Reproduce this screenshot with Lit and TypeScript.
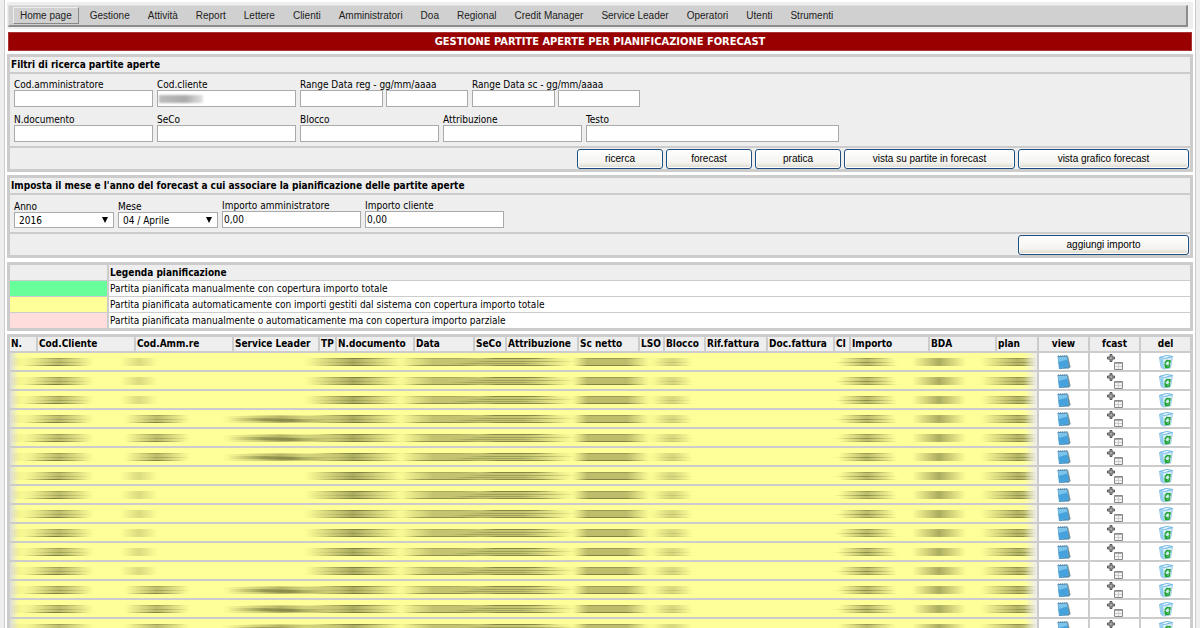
import { LitElement, html, svg, css } from "lit";
import { customElement } from "lit/decorators.js";

const MENU = ["Home page", "Gestione", "Attività", "Report", "Lettere", "Clienti", "Amministratori", "Doa", "Regional", "Credit Manager", "Service Leader", "Operatori", "Utenti", "Strumenti"];

const COLUMNS: [string, number][] = [
  ["N.", 26], ["Cod.Cliente", 96], ["Cod.Amm.re", 96], ["Service Leader", 84], ["TP", 15], ["N.documento", 76],
  ["Data", 58], ["SeCo", 30], ["Attribuzione", 70], ["Sc netto", 59], ["LSO", 23], ["Blocco", 39],
  ["Rif.fattura", 60], ["Doc.fattura", 65], ["CI", 14], ["Importo", 77], ["BDA", 65], ["plan", 40],
];
const ACTIONS: [string, number][] = [["view", 49], ["fcast", 49], ["del", 49]];

const LEGEND = [
  ["green", "Partita pianificata manualmente con copertura importo totale"],
  ["yellow", "Partita pianificata automaticamente con importi gestiti dal sistema con copertura importo totale"],
  ["pink", "Partita pianificata manualmente o automaticamente ma con copertura importo parziale"],
];

// true: the row carries an administrator and a service leader
const ROWS = [false, false, false, true, true, true, false, false, false, false, false, false, true, true, true];

// A redaction smear: start, end, top, height, opacity
type Streak = [number, number, number, number, number];
const COMMON: Streak[] = [
  [-20, 24, 5, 8, 0.1],
  [14, 84, 5, 8, 0.4], [22, 76, 5, 1, 0.35], [20, 82, 9, 1, 0.3], [12, 78, 12, 1, 0.7],
  [294, 392, 5, 8, 0.5], [304, 394, 5, 1, 0.6], [300, 388, 9, 1, 0.25], [304, 394, 12, 1, 0.65],
  [636, 682, 5, 8, 0.14], [646, 682, 5, 8, 0.14], [641, 686, 9, 1, 0.15], [641, 686, 12, 1, 0.15],
  [828, 886, 5, 8, 0.4], [833, 883, 5, 1, 0.4], [822, 888, 9, 1, 0.5], [830, 890, 12, 1, 0.4],
  [902, 956, 5, 8, 0.5],
  [970, 1046, 5, 8, 0.45], [975, 1040, 5, 1, 0.4], [980, 1050, 9, 1, 0.4], [975, 1045, 12, 1, 0.5],
];
const SHORT: Streak[] = [[110, 148, 5, 8, 0.22]];
const LONG: Streak[] = [
  [114, 180, 5, 8, 0.4], [118, 178, 5, 1, 0.3], [124, 182, 9, 1, 0.3], [116, 174, 12, 1, 0.6],
  [212, 330, 6, 7, 0.45], [218, 290, 8, 3, 0.4], [246, 318, 9, 3, 0.45], [230, 310, 5, 1, 0.3],
];
const WIDE: Streak[] = [
  [388, 566, 5, 8, 0.36], [392, 480, 12, 1, 0.5], [392, 470, 5, 1, 0.25], [470, 548, 5, 1, 0.6],
  [456, 568, 8, 1, 0.35], [440, 540, 10, 1, 0.3], [470, 556, 12, 1, 0.6],
  [562, 640, 5, 8, 0.4], [566, 636, 5, 1, 0.35], [564, 638, 12, 1, 0.6],
];

const bar = (fill: string) => ([a, b, y, h, o]: Streak) =>
  svg`<rect x=${a} y=${y} width=${b - a} height=${h} opacity=${o} fill=${fill}></rect>`;

const smears = (long: boolean) => html`
  <svg class="smear" viewBox="0 0 1027 17" preserveAspectRatio="none" aria-hidden="true">
    <defs>
      <linearGradient id="peak"><stop offset="0" stop-color="#5a5a28" stop-opacity="0"></stop><stop offset=".5" stop-color="#5a5a28"></stop><stop offset="1" stop-color="#5a5a28" stop-opacity="0"></stop></linearGradient>
      <linearGradient id="flat"><stop offset="0" stop-color="#5a5a28" stop-opacity="0"></stop><stop offset=".2" stop-color="#5a5a28"></stop><stop offset=".7" stop-color="#5a5a28"></stop><stop offset="1" stop-color="#5a5a28" stop-opacity="0"></stop></linearGradient>
      <linearGradient id="right"><stop offset="0" stop-color="#eee" stop-opacity="0"></stop><stop offset="1" stop-color="#eee"></stop></linearGradient>
      <linearGradient id="left"><stop offset="0" stop-color="#ddd"></stop><stop offset="1" stop-color="#ddd" stop-opacity="0"></stop></linearGradient>
    </defs>
    ${[...COMMON, ...(long ? LONG : SHORT)].map(bar("url(#peak)"))}
    ${WIDE.map(bar("url(#flat)"))}
    <rect x="1014" y="0" width="13" height="17" fill="url(#right)"></rect>
    <rect x="0" y="0" width="9" height="17" fill="url(#left)"></rect>
  </svg>`;

const noteIcon = html`
  <svg class="icon" viewBox="0 0 16 16" aria-hidden="true">
    <path d="M1.500 2l10-.5 3 11.500-2 1.500-9.500.5z" fill="#4b8fbd"></path>
    <path d="M2 3l9-.5 1.500 10-9 1.500z" fill="#7cc4ec"></path>
    <path d="M2.500 8l9-2.500 1 7-9 1.500z" fill="#46a2dc"></path>
    <path d="M2 2h10" stroke="#6d7c88" stroke-dasharray="1 1"></path>
    <path d="M12 2.500l2 10.500-2 1.500" stroke="#9a8f70" stroke-width=".7" fill="none"></path>
  </svg>`;

const addIcon = html`
  <svg class="icon" viewBox="0 0 16 16" aria-hidden="true">
    <path d="M3 .5h2v2.500h2.500v2H5v2.500H3V5H.5V3H3z" fill="#aaa" stroke="#555" stroke-linejoin="round"></path>
    <path d="M7.500 8.500h8v7h-8z" fill="#f4f4f4" stroke="#888"></path>
    <path d="M8 9.500h7" stroke="#aaa"></path>
    <path d="M8 12.500h7M11.500 10v5" stroke="#ccc"></path>
  </svg>`;

const binIcon = html`
  <svg class="icon" viewBox="0 0 16 16" aria-hidden="true">
    <path d="M1.500 3.500l6-1.500 7 .5-2 11.500-7 1-2.500-1.500z" fill="#d3ecf8" stroke="#9cc9e2"></path>
    <path d="M1.500 3.500l5 1 8-2-6-1z" fill="#f2fbff" stroke="#6db6e4"></path>
    <path d="M2 4.500l3 1 1 9-2.500-1z" fill="#8fcdf0"></path>
    <path d="M7 9l2-2.500 3 .5-.5 2.500M11.500 10l-.5 3-3 .5M7 9.500l.5 3.500 2-2" stroke="#1fa32c" stroke-width="1.600" fill="none"></path>
  </svg>`;

@customElement("app-root")
export class AppRoot extends LitElement {
  static styles = css`
    :host {
      display: block;
      height: 100vh;
      overflow: auto;
      scrollbar-width: none;
      background: #eee;
      color: #000;
      font: 10px/11px "DejaVu Sans Condensed", "Noto Sans", sans-serif;
    }
    * { box-sizing: border-box; }
    .page {
      margin: 0 4px;
      padding: 2px 2px 0;
      background: #fff;
      border: solid #ccc;
      border-width: 0 1px;
      display: flex;
      flex-direction: column;
      gap: 3px;
    }
    .menu { background: #eee; padding: 3px 5px 2px 1px; }
    .menu ul {
      display: flex;
      align-items: center;
      gap: 18px;
      margin: 0;
      padding: 1px 4px;
      list-style: none;
      background: #d0d0d0;
      border: 1px solid #ddd;
      border-right: 2px solid #8c8c8c;
      border-bottom: 2px solid #8c8c8c;
    }
    .menu li:first-child { margin-right: -7px; }
    .menu a {
      display: block;
      color: #222;
      text-decoration: none;
      font: 10px/16px "Liberation Sans", Arial, sans-serif;
    }
    .menu .current {
      padding: 0 6px;
      line-height: 15px;
      border: 1px solid #eee;
      border-right-color: #888;
      border-bottom-color: #888;
    }
    h1 {
      margin: 0 1px;
      background: #900;
      border: 1px solid #a33;
      color: #fff;
      text-align: center;
      font-size: 11px;
      line-height: 17px;
    }
    .panel { background: #ccc; padding: 3px; display: grid; gap: 2px; }
    .panel h2 { margin: 0; padding: 1px 1px 0; background: #eee; font-size: 10px; line-height: 14px; }
    .body { background: #eee; padding: 5px 4px 4px; display: grid; gap: 7px; }
    .fields { display: flex; flex-wrap: wrap; gap: 4px; align-items: flex-end; }
    .field { width: 139px; }
    .range { width: 168px; }
    .wide { width: 253px; }
    .pick { width: 100px; }
    .pair { display: flex; gap: 3px; }
    fieldset { margin: 0; padding: 0; border: 0; min-width: 0; }
    legend { padding: 0; }
    label, legend { display: block; white-space: nowrap; }
    input, select {
      display: block;
      width: 100%;
      height: 17px;
      margin: 0;
      padding: 0 1px;
      background: #fff;
      border: 1px solid #aaa;
      border-radius: 0;
      color: #000;
      font: inherit;
    }
    .select { display: grid; }
    .select > * { grid-area: 1 / 1; }
    select { appearance: none; height: 16px; padding: 0 4px; }
    .arrow { align-self: center; justify-self: end; width: 6px; height: 6px; margin-right: 6px; pointer-events: none; }
    .masked { display: grid; align-items: center; }
    .masked > * { grid-area: 1 / 1; }
    .mask { width: 44px; height: 8px; margin-left: 2px; background: linear-gradient(90deg, #bbb, #aaa 60%, #e4e4e4); filter: blur(1px); pointer-events: none; }
    .actions { background: #eee; display: flex; justify-content: flex-end; gap: 3px; padding: 1px 1px 0; }
    button { font: 10px/12px "Liberation Sans", Arial, sans-serif; color: #000; cursor: pointer; }
    .actions button {
      width: 86px;
      height: 20px;
      padding: 0;
      border: 1px solid #1f4f80;
      border-radius: 3px;
      background: linear-gradient(#fff, #f4f3ef 70%, #dcd8cc);
      box-shadow: inset 0 0 0 1px #fff;
    }
    .actions .long { width: 171px; }
    table { width: 100%; border-collapse: separate; table-layout: fixed; background: #ccc; }
    th { padding: 0 1px; background: #eee; text-align: left; white-space: nowrap; overflow: hidden; }
    td { padding: 0; }
    .legend { margin-top: 1px; border-spacing: 2px 1px; border: solid #ccc; border-width: 2px 1px; line-height: 14px; }
    .legend .swatch { width: 97px; }
    .legend th, .legend td { padding: 1px 1px 0; }
    .legend td { background: #fff; }
    .legend .green { background: #6f9; }
    .legend .yellow { background: #ff9; }
    .legend .pink { background: #fdd; }
    .data { border-spacing: 2px; border: 1px solid #ccc; }
    .data th { height: 14px; line-height: 14px; }
    .data td { height: 17px; background: #fff; }
    .data .act { text-align: center; }
    .data .row { background: #ff9; }
    .smear { display: block; width: 100%; height: 17px; }
    .act button { display: block; margin: 0 auto; padding: 0; border: 0; background: none; }
    .icon { display: block; width: 16px; height: 16px; }
  `;

  private text(id: string, label: string, cls = "", value = "") {
    return html`<div class="field ${cls}"><label for=${id}>${label}</label><input id=${id} .value=${value} /></div>`;
  }

  private range(label: string) {
    return html`<fieldset class="range"><legend>${label}</legend><div class="pair">
      <input aria-label="${label} da" /><input aria-label="${label} a" /></div></fieldset>`;
  }

  private pick(id: string, label: string, value: string) {
    return html`<div class="pick"><label for=${id}>${label}</label><div class="select">
      <select id=${id}><option>${value}</option></select>
      <svg class="arrow" viewBox="0 0 6 6" aria-hidden="true"><path d="M0 0h6L3 6z"></path></svg></div></div>`;
  }

  render() {
    return html`<div class="page">
      <nav class="menu"><ul>
        ${MENU.map((m, i) => html`<li><a href="#" class=${i ? "" : "current"}>${m}</a></li>`)}
      </ul></nav>
      <h1>GESTIONE PARTITE APERTE PER PIANIFICAZIONE FORECAST</h1>

      <section class="panel">
        <h2>Filtri di ricerca partite aperte</h2>
        <div class="body">
          <div class="fields">
            ${this.text("amm", "Cod.amministratore")}
            <div class="field"><label for="cli">Cod.cliente</label>
              <div class="masked"><input id="cli" /><span class="mask"></span></div></div>
            ${this.range("Range Data reg - gg/mm/aaaa")}
            ${this.range("Range Data sc - gg/mm/aaaa")}
          </div>
          <div class="fields">
            ${this.text("doc", "N.documento")} ${this.text("seco", "SeCo")} ${this.text("blocco", "Blocco")}
            ${this.text("attr", "Attribuzione")} ${this.text("testo", "Testo", "wide")}
          </div>
        </div>
        <div class="actions">
          <button>ricerca</button><button>forecast</button><button>pratica</button>
          <button class="long">vista su partite in forecast</button><button class="long">vista grafico forecast</button>
        </div>
      </section>

      <section class="panel">
        <h2>Imposta il mese e l'anno del forecast a cui associare la pianificazione delle partite aperte</h2>
        <div class="body"><div class="fields">
          ${this.pick("anno", "Anno", "2016")} ${this.pick("mese", "Mese", "04 / Aprile")}
          ${this.text("impamm", "Importo amministratore", "", "0,00")} ${this.text("impcli", "Importo cliente", "", "0,00")}
        </div></div>
        <div class="actions"><button class="long">aggiungi importo</button></div>
      </section>

      <table class="legend">
        <colgroup><col class="swatch" /><col /></colgroup>
        <tr><th></th><th>Legenda pianificazione</th></tr>
        ${LEGEND.map(([c, t]) => html`<tr><td class=${c}></td><td>${t}</td></tr>`)}
      </table>

      <table class="data">
        <colgroup>${[...COLUMNS, ...ACTIONS].map(([, w]) => html`<col style="width:${w}px" />`)}</colgroup>
        <thead><tr>
          ${COLUMNS.map(([n]) => html`<th>${n}</th>`)}
          ${ACTIONS.map(([n]) => html`<th class="act">${n}</th>`)}
        </tr></thead>
        <tbody>
          ${ROWS.map((long) => html`<tr>
            <td class="row" colspan=${COLUMNS.length}>${smears(long)}</td>
            <td class="act"><button aria-label="view">${noteIcon}</button></td>
            <td class="act"><button aria-label="fcast">${addIcon}</button></td>
            <td class="act"><button aria-label="del">${binIcon}</button></td>
          </tr>`)}
        </tbody>
      </table>
    </div>`;
  }
}
